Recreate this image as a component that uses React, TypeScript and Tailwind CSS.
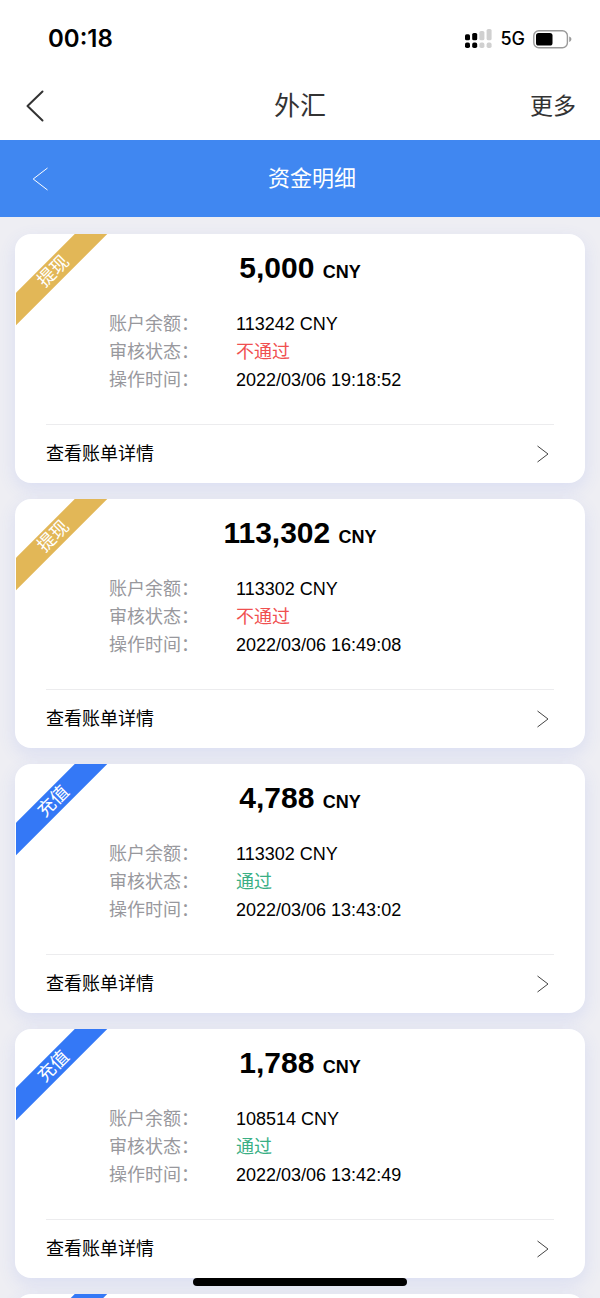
type RecordKind = "withdraw" | "deposit";

interface FundRecord {
  id: number;
  kind: RecordKind;
  amount: string;
  balance: string;
  passed: boolean;
  time: string;
}

const records: FundRecord[] = [
  { id: 1, kind: "withdraw", amount: "5,000", balance: "113242", passed: false, time: "2022/03/06 19:18:52" },
  { id: 2, kind: "withdraw", amount: "113,302", balance: "113302", passed: false, time: "2022/03/06 16:49:08" },
  { id: 3, kind: "deposit", amount: "4,788", balance: "113302", passed: true, time: "2022/03/06 13:43:02" },
  { id: 4, kind: "deposit", amount: "1,788", balance: "108514", passed: true, time: "2022/03/06 13:42:49" },
  { id: 5, kind: "deposit", amount: "1,000", balance: "106726", passed: true, time: "2022/03/06 13:40:15" },
];

const ribbons: Record<RecordKind, { label: string; color: string }> = {
  withdraw: { label: "提现", color: "bg-[#e2b757]" },
  deposit: { label: "充值", color: "bg-[#3478f6]" },
};

function StatusBar() {
  return (
    <div className="flex h-[72px] items-center justify-between pt-1.5 pr-7 pl-12 font-['Inter',sans-serif] text-black">
      <span className="text-2xl font-semibold">00:18</span>
      <div className="flex items-center gap-2">
        <svg width="27" height="20" viewBox="0 0 27 20" aria-hidden="true">
          <rect x="0" y="5.3" width="5" height="6" rx="1.6" />
          <rect x="7.2" y="4" width="5" height="7.3" rx="1.6" />
          <rect x="14.4" y="2" width="5" height="9.3" rx="1.6" fill="#d0d0d0" />
          <rect x="21.6" y="0" width="5" height="11.3" rx="1.6" fill="#d0d0d0" />
          <rect x="0" y="13.6" width="5" height="5.4" rx="1.8" />
          <rect x="7.2" y="13.6" width="5" height="5.4" rx="1.8" />
          <rect x="14.4" y="13.6" width="5" height="5.4" rx="1.8" fill="#d0d0d0" />
          <rect x="21.6" y="13.6" width="5" height="5.4" rx="1.8" fill="#d0d0d0" />
        </svg>
        <span className="text-lg font-medium">5G</span>
        <svg width="39" height="19" viewBox="0 0 39 19" aria-hidden="true">
          <rect x="0.8" y="0.8" width="33.6" height="17" rx="5" fill="none" stroke="#9a9a9a" strokeWidth="1.4" />
          <rect x="3" y="3" width="16.5" height="12.6" rx="2.6" />
          <path d="M36.2 6.6c1.4.5 2.2 1.500 2.200 2.700s-.8 2.200-2.200 2.700z" fill="#9a9a9a" />
        </svg>
      </div>
    </div>
  );
}

function RecordCard({ record }: { record: FundRecord }) {
  const ribbon = ribbons[record.kind];

  return (
    <article className="relative rounded-[16px] bg-white px-[31px] pt-4 shadow-[0_6px_18px_rgba(70,110,240,0.12)]">
      <div className="absolute top-0 left-px size-24 overflow-hidden">
        <div
          className={`absolute top-[26px] left-[-32px] h-[23px] w-[139px] -rotate-45 text-center text-lg leading-[23px] text-white ${ribbon.color}`}
        >
          {ribbon.label}
        </div>
      </div>

      <h2 className="text-center text-[30px] leading-9 font-bold">
        {record.amount} <span className="text-lg leading-none">CNY</span>
      </h2>

      <dl className="mt-6 grid grid-cols-[127px_1fr] pb-[30px] pl-[63px] text-lg leading-7">
        <dt className="text-[#98989d]">账户余额：</dt>
        <dd>{record.balance} CNY</dd>
        <dt className="text-[#98989d]">审核状态：</dt>
        <dd className={record.passed ? "text-[#3aaf85]" : "text-[#f05050]"}>
          {record.passed ? "通过" : "不通过"}
        </dd>
        <dt className="text-[#98989d]">操作时间：</dt>
        <dd>{record.time}</dd>
      </dl>

      <a href="#" className="flex h-[59px] items-center justify-between border-t border-[#ececee] pr-1 text-lg">
        查看账单详情
        <svg width="14" height="18" viewBox="0 0 14 18" fill="none" stroke="#444" strokeWidth="1" aria-hidden="true">
          <path d="M1.500 1 12 9 1.500 17" />
        </svg>
      </a>
    </article>
  );
}

export default function App() {
  return (
    <div className="flex h-screen flex-col bg-[#eeeef3] font-['Liberation_Sans','Noto_Sans_CJK_SC',sans-serif] text-black">
      <header className="shrink-0 bg-white">
        <StatusBar />
        <div className="grid h-[68px] grid-cols-[1fr_auto_1fr] items-center px-6 text-[#333]">
          <button type="button" aria-label="返回" className="justify-self-start">
            <svg width="22" height="32" viewBox="0 0 22 32" fill="none" stroke="currentColor" strokeWidth="2" aria-hidden="true">
              <path d="M18.500 1.500 3.500 16l15 14.500" strokeLinecap="round" strokeLinejoin="round" />
            </svg>
          </button>
          <h1 className="text-[26px]">外汇</h1>
          <button type="button" className="justify-self-end text-[23px]">
            更多
          </button>
        </div>
      </header>

      <div className="flex h-[77px] shrink-0 items-center bg-[#4087f1] px-8 text-white">
        <button type="button" aria-label="返回上一页" className="w-6">
          <svg width="18" height="24" viewBox="0 0 18 24" fill="none" stroke="currentColor" strokeWidth="1" aria-hidden="true">
            <path d="M15.500 1 1.200 12l14.300 11" />
          </svg>
        </button>
        <p className="flex-1 text-center text-[22px]">资金明细</p>
      </div>

      <main className="flex min-h-0 flex-1 flex-col gap-4 overflow-y-auto px-[15px] py-[17px] [scrollbar-width:none]">
        {records.map((record) => (
          <RecordCard key={record.id} record={record} />
        ))}
      </main>

      <div className="fixed bottom-3 left-1/2 h-2 w-[214px] -translate-x-1/2 rounded-full bg-black" />
    </div>
  );
}
